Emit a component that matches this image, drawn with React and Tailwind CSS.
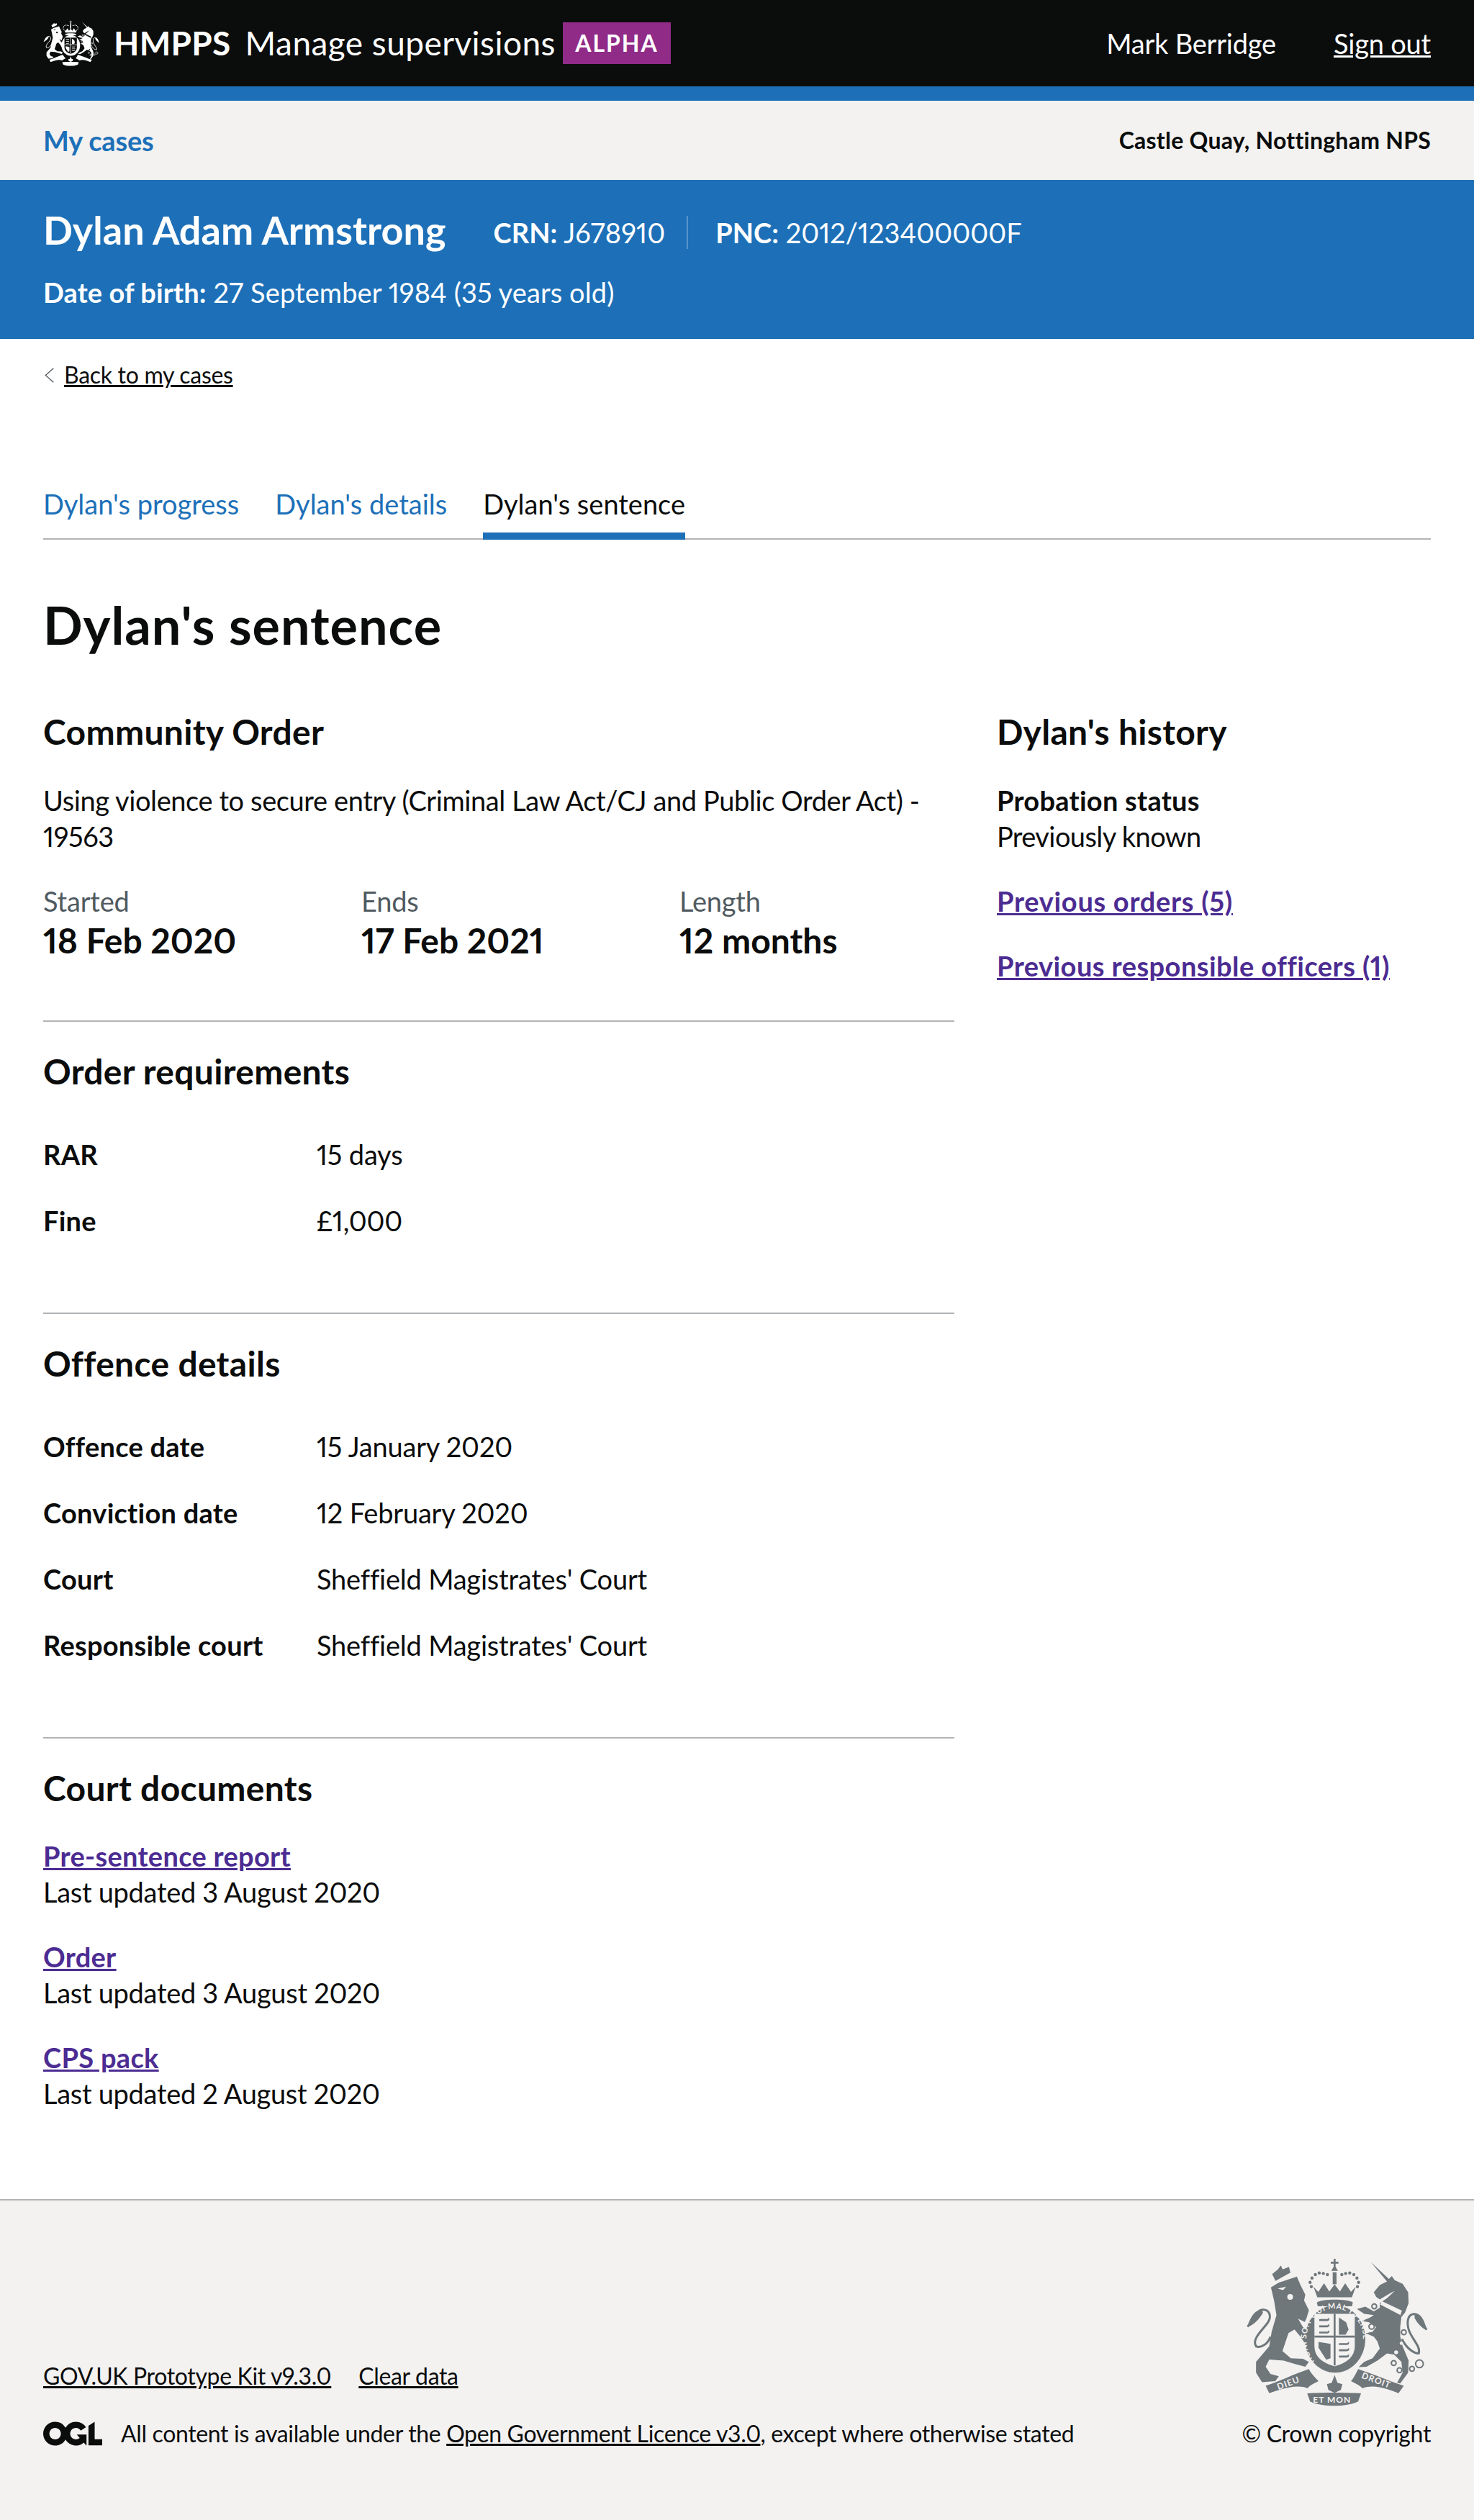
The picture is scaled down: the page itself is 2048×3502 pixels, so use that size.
import React from "react";

// Royal coat of arms, drawn in the coordinates of the footer crest
const Crest = ({ className, bg, showText = true }) => {
  const passant = (x, y) => (
    <path key={`${x}-${y}`} d={`M${x} ${y + 5} h34 l8 -6 v10 l-8 4 h-34 z`} />
  );
  const dots = [
    [515, 232], [510, 214], [518, 196], [532, 182], [548, 175], [565, 177], [582, 182],
    [642, 182], [658, 177], [675, 175], [692, 182], [705, 196], [712, 214], [707, 232],
  ];
  return (
    <svg viewBox="240 110 760 620" className={className} fill="currentColor">
      {/* crown */}
      <path d="M596 128h12v-12h8v12h12v8h-12v14l10 16h-28l10 -16v-14h-12z" />
      <path d="M604 172h16v50h-16z" />
      <path d="M524 232l20 22 24 -36 22 34 22 -30 22 30 22 -34 24 36 20 -22 -16 44h-144z" />
      <path d="M538 298c20 -16 130 -16 150 0l-4 16h-142z" />
      {dots.map(([x, y]) => (
        <circle key={`${x}-${y}`} cx={x} cy={y} r="6.5" />
      ))}
      {/* lion crown */}
      <path d="M352 180l24 -20 12 -16 8 16 26 -10 6 24 -62 34z" />
      {/* lion */}
      <path d="M347 235l33 -20 75 -25 15 35 20 40 -5 25 20 40 -15 50 -30 -15 20 35 30 25 10 40 -30 5 -20 -30 -25 -30 -25 15 -25 75 35 30 50 2 25 13 -15 20 -40 -10 -50 -15 -60 -5 -15 30 20 30 35 10 -15 20 -55 5 -25 -40v-45l55 -65 10 -60 20 -70 -10 -60z" />
      <path d="M345 440c-10 30 -40 50 -60 40 -20 -30 30 -70 50 -100 16 -26 6 -55 -25 -52 -25 3 -30 40 -60 70" fill="none" stroke="currentColor" strokeWidth="9" />
      <path d="M310 330c-20 -5 -45 15 -62 70 24 -6 50 -30 66 -60z" />
      <circle cx="427" cy="275" r="12" fill={bg} />
      <path d="M375 240l35 -8 -12 14z" fill={bg} />
      {/* unicorn */}
      <path d="M763 130L838 200L850 188L862 205L895 220L918 255L920 300L905 340L890 358L885 400L885 440L895 480L920 540L918 590L885 635L872 632L895 590L890 545L860 515L830 510L790 540L745 565L712 567L735 545L770 530L800 490L790 460L775 440L740 425L770 420L785 400L755 380L725 375L760 360L775 350L735 345L705 325L740 315L775 335L800 320L800 300L830 280L862 250L845 258L800 285L785 275L775 255L800 225L830 210Z" />
      <path d="M802 306l6 -14 84 40 -6 18z" fill={bg} />
      <path d="M892 450c20 40 50 60 70 60 10 -30 -30 -60 -42 -100 -8 -30 -5 -65 25 -64 25 2 30 40 50 65" fill="none" stroke="currentColor" strokeWidth="9" />
      <path d="M945 344c20 -4 40 20 50 68 -20 -6 -40 -30 -50 -50z" />
      {[[777, 314, 10], [766, 398, 11], [900, 422, 10], [858, 550, 10], [882, 580, 10], [934, 574, 10], [965, 553, 16]].map(([x, y, r]) => (
        <circle key={x} cx={x} cy={y} r={r} fill={bg} stroke="currentColor" strokeWidth="6" />
      ))}
      <circle cx="868" cy="505" r="8" fill={bg} />
      <circle cx="890" cy="468" r="7" fill={bg} />
      {/* garter and shield */}
      <ellipse cx="614" cy="450" rx="126" ry="140" />
      <path d="M528 345h168v135q0 60 -84 84q-84 -24 -84 -84z" fill={bg} />
      <path d="M608 345h8v215h-8zM528 436h168v8h-168z" />
      {[362, 388, 414].map((y) => passant(548, y))}
      {[462, 488, 514].map((y) => passant(630, y))}
      <path d="M630 360l30 20 10 30 -12 22h-28z" />
      <path d="M545 462l50 8v60l-18 6 -32 -50z" />
      {showText && (
        <>
          <defs>
            <path id="garter" d="M530 545c-52 -60 -45 -150 10 -195c45 -35 100 -35 145 0c55 45 62 125 12 190" />
          </defs>
          <text fontFamily="Lato, sans-serif" fontWeight="700" fontSize="32" fill={bg} letterSpacing="2">
            <textPath href="#garter" startOffset="2">HONI SOIT QUI MAL Y PENSE</textPath>
          </text>
        </>
      )}
      {/* motto ribbons */}
      <path d="M325 645c60 -20 120 -50 180 -70 10 20 30 40 40 50 -20 10 -40 20 -45 30 -50 -20 -110 5 -160 20z" />
      <path d="M900 645c-60 -20 -130 -50 -190 -70 -10 20 -20 40 -30 50 20 10 40 20 48 30 50 -20 110 5 150 20z" />
      <path d="M498 676c60 -4 160 -4 224 0l-12 34c-50 24 -150 24 -200 0z" />
      <path d="M612 600l12 32 20 6 -6 24 -26 12 -26 -12 -6 -24 20 -6z" />
      {showText && (
        <g fontFamily="Lato, sans-serif" fontWeight="700" fontSize="36" fill={bg} letterSpacing="3">
          <text x="378" y="662" transform="rotate(-20 378 662)">DIEU</text>
          <text x="522" y="714">ET MON</text>
          <text x="722" y="612" transform="rotate(20 722 612)">DROIT</text>
        </g>
      )}
    </svg>
  );
};

const OglLogo = () => (
  <svg viewBox="0 0 483.2 195.7" className="w-[82px] h-[34px] shrink-0" fill="currentColor">
    <path d="M421.5 142.8V.1l-50.7 32.3v161.1h112.4v-50.7zm-122.3-9.6A47.12 47.12 0 0 1 221 97.8c0-26 21.1-47.1 47.1-47.1 16.7 0 31.4 8.7 39.7 21.8l42.7-27.2A97.63 97.63 0 0 0 268.1 0c-36.5 0-68.3 20.1-85.1 49.7A98 98 0 0 0 97.8 0C43.9 0 0 43.9 0 97.8s43.9 97.8 97.8 97.8c36.5 0 68.3-20.1 85.1-49.7a97.76 97.76 0 0 0 149.6 25.4l19.4 22.2h3v-87.8h-80l24.3 27.5zM97.8 145c-26 0-47.1-21.1-47.1-47.1s21.1-47.1 47.1-47.1 47.2 21 47.2 47S123.8 145 97.8 145" />
  </svg>
);

const SummaryRow = ({ label, value }) => (
  <div className="flex pb-[42px]">
    <dt className="w-[380px] font-bold tracking-[0.25px]">{label}</dt>
    <dd>{value}</dd>
  </div>
);

const SectionTitle = ({ children, className = "" }) => (
  <h2 className={`text-[48px] leading-[60px] font-bold tracking-[0.3px] ${className}`}>{children}</h2>
);

const DocLink = ({ title, updated }) => (
  <div className="mb-[40px]">
    <a className="block font-bold underline text-[#4c2c92] tracking-[0.3px]">{title}</a>
    <p className="tracking-[-0.3px]">{updated}</p>
  </div>
);

const App = () => {
  return (
    <div className="min-h-[3502px] flex flex-col bg-white text-[#0b0c0c] text-[38px] leading-[50px] tracking-[-0.2px] proportional-nums font-[Lato,sans-serif]">
      {/* Header */}
      <header className="bg-[#0b0c0c] text-white border-b-[20px] border-[#1d70b8] h-[140px] px-[60px] flex items-center justify-between">
        <div className="flex items-center">
          <Crest className="w-[78px] h-[68px]" bg="#0b0c0c" showText={false} />
          <span className="ml-[20px] text-[46px] font-bold tracking-[0.3px]">HMPPS</span>
          <span className="ml-[20px] text-[46px] tracking-[0.45px]">Manage supervisions</span>
          <span className="ml-[10px] w-[150px] h-[58px] bg-[#912b88] flex items-center justify-center text-[32px] leading-none font-bold tracking-[2px]">ALPHA</span>
        </div>
        <div className="flex items-center gap-[80px]">
          <span>Mark Berridge</span>
          <a className="underline">Sign out</a>
        </div>
      </header>

      {/* Nav */}
      <nav className="bg-[#f3f2f1] h-[110px] px-[60px] flex items-center justify-between">
        <a className="font-bold text-[#1d70b8]">My cases</a>
        <span className="text-[32px] font-bold tracking-[0.25px]">Castle Quay, Nottingham NPS</span>
      </nav>

      {/* Case banner */}
      <section className="bg-[#1d70b8] text-white h-[221px] px-[60px] pt-[35px] tracking-[0.1px]">
        <div className="flex items-center h-[70px]">
          <h1 className="text-[54px] font-bold tracking-normal">Dylan Adam Armstrong</h1>
          <p className="ml-[66px] mt-[6px] pr-[30px] border-r-2 border-[#5694ca] leading-[46px]"><b>CRN:</b> J678910</p>
          <p className="ml-[38px] mt-[6px] tracking-normal"><b>PNC:</b> 2012/123400000F</p>
        </div>
        <p className="mt-[26px]"><b>Date of birth:</b> 27 September 1984 (35 years old)</p>
      </section>

      <main className="flex-1 px-[60px]">
        <div className="flex items-center h-[40px] mt-[30px] text-[32px] tracking-[-0.3px]">
          <svg viewBox="0 0 10 16" className="ml-[2px] w-[13px] h-[21px] text-[#505a5f]" fill="none" stroke="currentColor" strokeWidth="1">
            <path d="M9.5 .5L1 8l8.5 7.5" />
          </svg>
          <a className="ml-[14px] underline">Back to my cases</a>
        </div>

        {/* Tabs */}
        <div className="flex gap-[50px] mt-[129px] h-[80px] border-b-2 border-[#b1b4b6] tracking-normal">
          <a className="text-[#1d70b8] pt-[5px]">Dylan's progress</a>
          <a className="text-[#1d70b8] pt-[5px]">Dylan's details</a>
          <a className="pt-[5px] h-[80px] border-b-[10px] border-[#1d70b8]">Dylan's sentence</a>
        </div>

        <h2 className="text-[72px] leading-[80px] font-bold tracking-[1px] mt-[78px]">Dylan's sentence</h2>

        <div className="flex gap-[59px] mt-[79px]">
          <div className="w-[1266px]">
            <SectionTitle>Community Order</SectionTitle>
            <p className="mt-[40px] tracking-[-0.4px]">Using violence to secure entry (Criminal Law Act/CJ and Public Order Act) - 19563</p>
            <div className="grid grid-cols-[442px_442px_382px] mt-[40px]">
              {[
                ["Started", "18 Feb 2020"],
                ["Ends", "17 Feb 2021"],
                ["Length", "12 months"],
              ].map(([label, value]) => (
                <div key={label}>
                  <p className="text-[#505a5f]">{label}</p>
                  <p className="text-[48px] leading-[60px] font-bold tracking-normal">{value}</p>
                </div>
              ))}
            </div>

            <hr className="mt-[81px] border-t-2 border-[#b1b4b6]" />
            <SectionTitle className="mt-[39px]">Order requirements</SectionTitle>
            <dl className="mt-[60px]">
              <SummaryRow label="RAR" value="15 days" />
              <SummaryRow label="Fine" value="£1,000" />
            </dl>

            <hr className="mt-[61px] border-t-2 border-[#b1b4b6]" />
            <SectionTitle className="mt-[39px]">Offence details</SectionTitle>
            <dl className="mt-[60px]">
              <SummaryRow label="Offence date" value="15 January 2020" />
              <SummaryRow label="Conviction date" value="12 February 2020" />
              <SummaryRow label="Court" value="Sheffield Magistrates' Court" />
              <SummaryRow label="Responsible court" value="Sheffield Magistrates' Court" />
            </dl>

            <hr className="mt-[61px] border-t-2 border-[#b1b4b6]" />
            <SectionTitle className="mt-[39px]">Court documents</SectionTitle>
            <div className="mt-[39px]">
              <DocLink title="Pre-sentence report" updated="Last updated 3 August 2020" />
              <DocLink title="Order" updated="Last updated 3 August 2020" />
              <DocLink title="CPS pack" updated="Last updated 2 August 2020" />
            </div>
          </div>

          <aside className="w-[603px]">
            <SectionTitle>Dylan's history</SectionTitle>
            <p className="mt-[40px] font-bold tracking-[0.25px]">Probation status</p>
            <p className="tracking-[-0.6px]">Previously known</p>
            <a className="block mt-[40px] font-bold underline text-[#4c2c92] tracking-[0.7px]">Previous orders (5)</a>
            <a className="block mt-[40px] font-bold underline text-[#4c2c92] tracking-[0.45px]">Previous responsible officers (1)</a>
          </aside>
        </div>
      </main>

      {/* Footer */}
      <footer className="bg-[#f3f2f1] border-t-2 border-[#b1b4b6] h-[446px] px-[60px] pb-[100px] flex items-end justify-between text-[32px] leading-[40px] tracking-[-0.35px]">
        <div>
          <div className="flex gap-[38px] mb-[40px]">
            <a className="underline">GOV.UK Prototype Kit v9.3.0</a>
            <a className="underline">Clear data</a>
          </div>
          <div className="flex items-center">
            <OglLogo />
            <p className="ml-[26px]">
              All content is available under the <a className="underline">Open Government Licence v3.0</a>, except where otherwise stated
            </p>
          </div>
        </div>
        <div className="flex flex-col items-end">
          <Crest className="w-[254px] h-[207px] text-[#6f777b] mr-[4px] mb-[18px]" bg="#f3f2f1" />
          <span>© Crown copyright</span>
        </div>
      </footer>
    </div>
  );
};

export default App;
